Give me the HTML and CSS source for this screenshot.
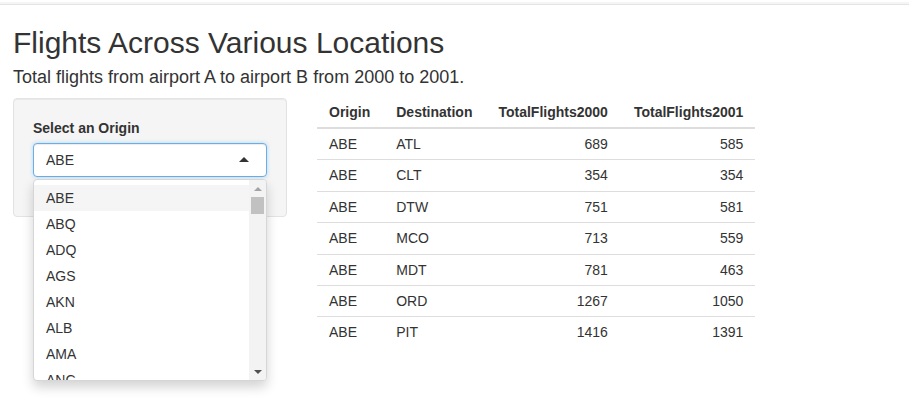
FILE: index.html
```html
<!DOCTYPE html>
<html lang="en">
<head>
  <meta charset="UTF-8" />
  <title>Flights Across Various Locations</title>
  <link rel="stylesheet" href="styles.css">
</head>
<body>

  <div class="topbar"></div>

  <div class="page">
    <h2 class="title">Flights Across Various Locations</h2>
    <p class="subtitle">Total flights from airport A to airport B from 2000 to 2001.</p>

    <div class="layout">
      <div class="well">
        <label class="field-label">Select an Origin</label>
        <div class="select">
          <div class="select-input">ABE<span class="caret"></span></div>
          <div class="select-dropdown">
            <div class="options">
              <div class="option active">ABE</div>
              <div class="option">ABQ</div>
              <div class="option">ADQ</div>
              <div class="option">AGS</div>
              <div class="option">AKN</div>
              <div class="option">ALB</div>
              <div class="option">AMA</div>
              <div class="option">ANC</div>
            </div>
            <div class="scrollbar">
              <div class="sb-btn"><span class="sb-up"></span></div>
              <div class="sb-track"><div class="sb-thumb"></div></div>
              <div class="sb-btn"><span class="sb-down"></span></div>
            </div>
          </div>
        </div>
      </div>

      <div class="main">
        <table class="flights">
          <thead>
            <tr>
              <th>Origin</th>
              <th>Destination</th>
              <th class="num">TotalFlights2000</th>
              <th class="num">TotalFlights2001</th>
            </tr>
          </thead>
          <tbody>
            <tr><td>ABE</td><td>ATL</td><td class="num">689</td><td class="num">585</td></tr>
            <tr><td>ABE</td><td>CLT</td><td class="num">354</td><td class="num">354</td></tr>
            <tr><td>ABE</td><td>DTW</td><td class="num">751</td><td class="num">581</td></tr>
            <tr><td>ABE</td><td>MCO</td><td class="num">713</td><td class="num">559</td></tr>
            <tr><td>ABE</td><td>MDT</td><td class="num">781</td><td class="num">463</td></tr>
            <tr><td>ABE</td><td>ORD</td><td class="num">1267</td><td class="num">1050</td></tr>
            <tr><td>ABE</td><td>PIT</td><td class="num">1416</td><td class="num">1391</td></tr>
          </tbody>
        </table>
      </div>
    </div>
  </div>

</body>
</html>
```

FILE: styles.css
```css
html, body {
  min-height: 100vh;
}

body {
  margin: 0;
  font-family: "Liberation Sans", Arial, Helvetica, sans-serif;
  font-size: 14px;
  line-height: 20px;
  color: #333;
  background: #fff;
}

.topbar {
  height: 4px;
  border-bottom: 1px solid #e4e4e4;
  box-shadow: inset 0 -2px 0 #f5f5f5;
}

.page {
  padding: 0 13px;
}

.title {
  margin: 21px 0 8px;
  font-size: 30px;
  line-height: 33px;
  font-weight: normal;
  color: #333;
}

.subtitle {
  margin: 0 0 10px;
  font-size: 18px;
  line-height: 20px;
}

.layout {
  display: flex;
  align-items: flex-start;
  gap: 30px;
}

.well {
  width: 274px;
  box-sizing: border-box;
  margin-top: 1px;
  padding: 19px;
  background-color: #f5f5f5;
  border: 1px solid #e3e3e3;
  border-radius: 4px;
  box-shadow: inset 0 1px 1px rgba(0,0,0,0.05);
}

.field-label {
  display: block;
  margin-bottom: 5px;
  font-weight: bold;
}

.select {
  position: relative;
  margin-bottom: 20px;
}

.select-input {
  position: relative;
  height: 34px;
  box-sizing: border-box;
  padding: 6px 12px;
  background: #fff;
  border: 1px solid #66afe9;
  border-radius: 4px;
  box-shadow: inset 0 1px 1px rgba(0,0,0,0.075), 0 0 4px rgba(102,175,233,0.45);
}

.caret {
  position: absolute;
  right: 17px;
  top: 50%;
  margin-top: -3px;
  width: 0;
  height: 0;
  border-style: solid;
  border-width: 0 5px 5px;
  border-color: transparent transparent #333;
}

.select-dropdown {
  position: absolute;
  top: 100%;
  left: 0;
  right: 0;
  margin-top: 2px;
  display: flex;
  background: #fff;
  border: 1px solid #d6d6d6;
  border-radius: 4px;
  box-shadow: 0 6px 12px rgba(0,0,0,0.175);
  z-index: 10;
  overflow: hidden;
}

.options {
  flex: 1;
  height: 200px;
  box-sizing: border-box;
  padding-top: 5px;
  overflow: hidden;
}

.option {
  padding: 3px 12px;
  line-height: 20px;
  color: #333;
}

.option.active {
  background-color: #f5f5f5;
}

.scrollbar {
  width: 17px;
  height: 200px;
  display: flex;
  flex-direction: column;
  background: #f3f3f3;
}

.sb-btn {
  height: 17px;
  display: flex;
  align-items: center;
  justify-content: center;
}

.sb-up, .sb-down {
  width: 0;
  height: 0;
  border-style: solid;
}

.sb-up {
  border-width: 0 4px 4px;
  border-color: transparent transparent #a3a3a3;
}

.sb-down {
  border-width: 4px 4px 0;
  border-color: #505050 transparent transparent;
}

.sb-track {
  flex: 1;
}

.sb-thumb {
  height: 17px;
  margin: 0 2px;
  background: #c1c1c1;
}

.flights {
  border-collapse: collapse;
  font-size: 14px;
  color: #333;
}

.flights th,
.flights td {
  padding: 5px 13px;
  line-height: 20px;
  text-align: left;
}

.flights th {
  font-weight: bold;
  border-bottom: 2px solid #ddd;
  vertical-align: bottom;
}

.flights td {
  line-height: 20.4px;
  border-top: 1px solid #ddd;
}

.flights th:first-child,
.flights td:first-child {
  padding-left: 12px;
}

.flights th:last-child,
.flights td:last-child {
  padding-right: 12px;
}

.flights .num {
  text-align: right;
}
```
